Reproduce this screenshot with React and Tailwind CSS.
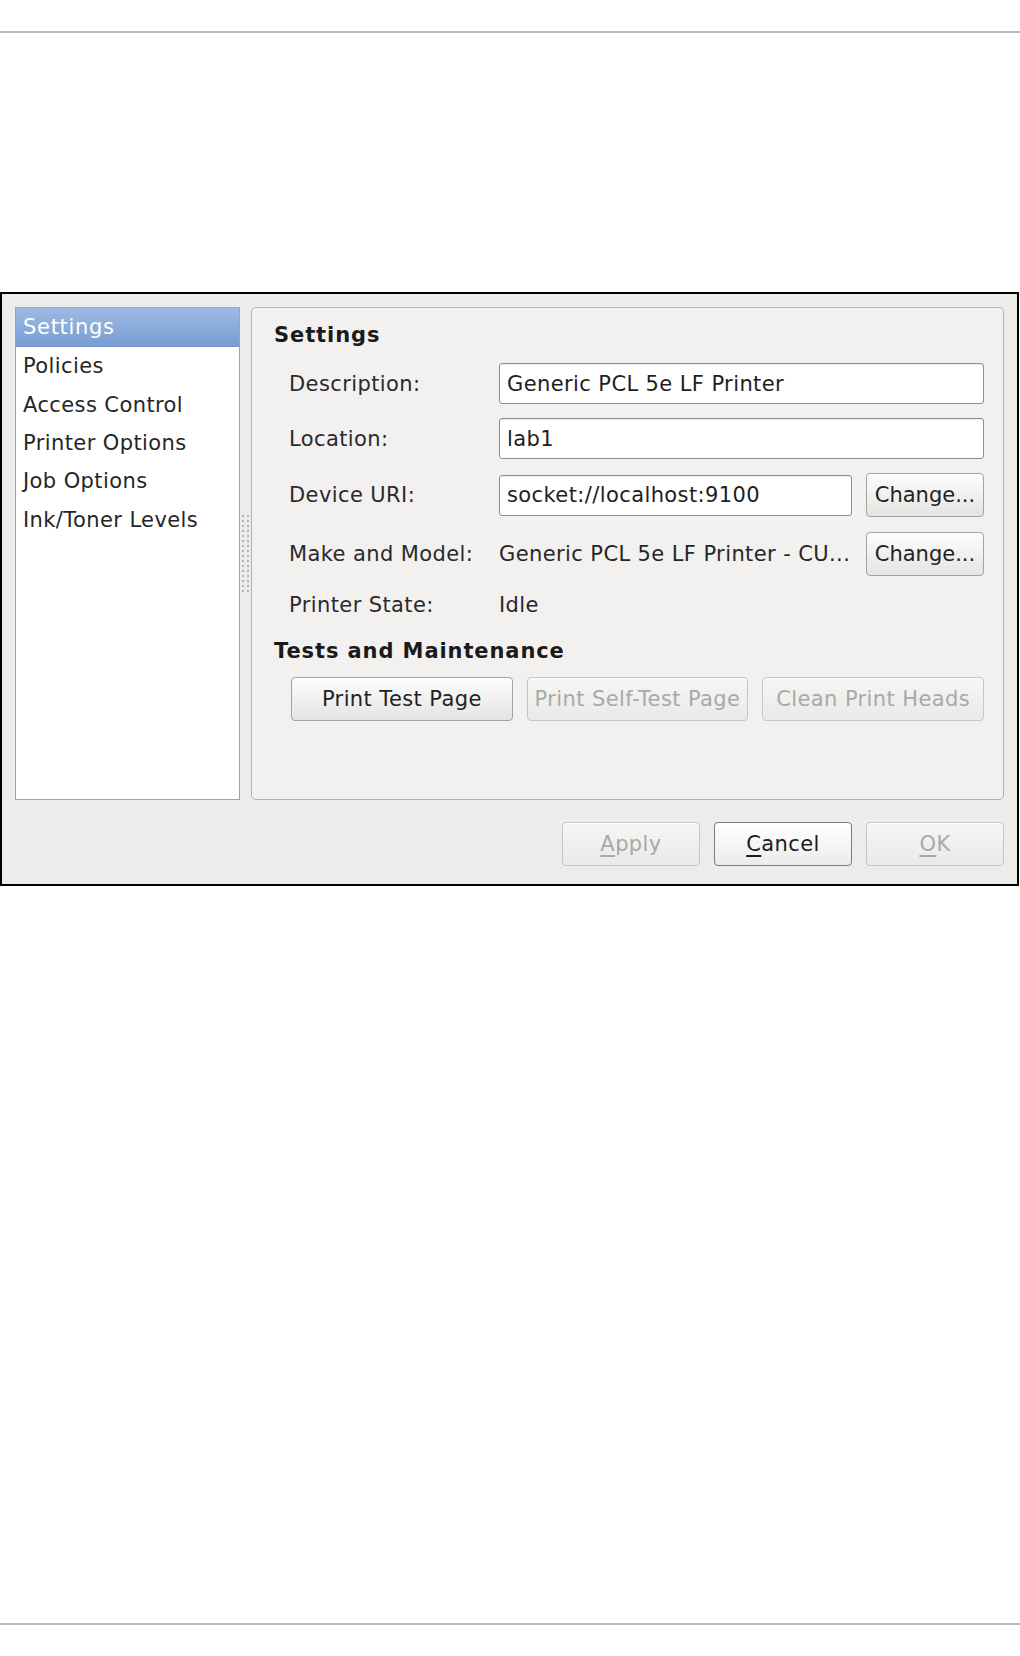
import React from "react";

const sections = [
  "Settings",
  "Policies",
  "Access Control",
  "Printer Options",
  "Job Options",
  "Ink/Toner Levels",
];

function Grip() {
  const dots = [];
  for (let i = 0; i < 16; i++) {
    dots.push(<rect key={"a" + i} x="2" y={1 + i * 5} width="2" height="2" fill="#b0b0b0" />);
    dots.push(<rect key={"b" + i} x="7" y={1 + i * 5} width="2" height="2" fill="#b0b0b0" />);
  }
  return (
    <svg width="11" height="80" viewBox="0 0 11 80">
      {dots}
    </svg>
  );
}

function Button({ children, disabled, focused, className = "" }) {
  let look =
    "border-[#a3a3a3] bg-gradient-to-b from-[#fdfdfd] to-[#e4e4e3] text-[#222]";
  if (disabled)
    look =
      "border-[#c6c6c5] bg-gradient-to-b from-[#f6f6f5] to-[#e9e9e8] text-[#a9a9a8]";
  if (focused)
    look =
      "border-[#7b7b7b] bg-gradient-to-b from-[#ffffff] to-[#ececec] text-[#1c1c1c]";
  return (
    <div
      className={`h-[44px] flex items-center justify-center rounded-[4px] border shadow-[inset_0_1px_0_#ffffff] whitespace-nowrap ${look} ${className}`}
    >
      {children}
    </div>
  );
}

function Field({ value, className = "" }) {
  return (
    <div
      className={`h-[41px] flex items-center px-[7px] bg-white border border-[#8e8e8d] rounded-[3px] shadow-[inset_0_1px_1px_rgba(0,0,0,0.08)] text-[#1e1e1e] ${className}`}
    >
      {value}
    </div>
  );
}

function Label({ children }) {
  return <div className="w-[210px] shrink-0 text-[#2a2a2a]">{children}</div>;
}

export default function App() {
  return (
    <div className="w-[1020px] h-[1656px] bg-white font-['DejaVu_Sans',sans-serif] text-[21px] leading-[26px] tracking-[0.4px]">
      <div className="h-[31px]" />
      <div className="h-[2px] bg-[#bbbbbb]" />
      <div className="h-[259px]" />

      {/* dialog window */}
      <div className="w-[1019px] border-2 border-black bg-[#edeceb] pt-[13px] pl-[13px] pr-[13px] pb-[18px]">
        <div className="flex h-[493px]">
          {/* sidebar */}
          <div className="w-[225px] h-full border border-[#a3a3a2] bg-white">
            {sections.map((s, i) =>
              i === 0 ? (
                <div
                  key={s}
                  className="h-[39px] flex items-center pl-[7px] text-white tracking-[0.7px] bg-gradient-to-b from-[#9dbae4] to-[#789dd3] border-b border-[#6f93c8]"
                >
                  {s}
                </div>
              ) : (
                <div key={s} className="h-[38.4px] flex items-center pl-[7px] text-[#262626]">
                  {s}
                </div>
              )
            )}
          </div>

          {/* pane grip */}
          <div className="w-[11px] flex items-center">
            <Grip />
          </div>

          {/* settings panel */}
          <div className="w-[753px] h-full border border-[#b3b3b2] rounded-[5px] bg-[#f2f1f0]">
            <div className="mt-[14px] pl-[22px] font-bold tracking-[0.9px] text-[#1a1a1a]">
              Settings
            </div>

            <div className="pl-[37px] pr-[19px]">
              <div className="mt-[15px] flex items-center h-[41px]">
                <Label>Description:</Label>
                <Field value="Generic PCL 5e LF Printer" className="flex-1" />
              </div>

              <div className="mt-[14px] flex items-center h-[41px]">
                <Label>Location:</Label>
                <Field value="lab1" className="flex-1" />
              </div>

              <div className="mt-[14px] flex items-center h-[44px]">
                <Label>Device URI:</Label>
                <Field value="socket://localhost:9100" className="flex-1" />
                <Button className="w-[118px] ml-[14px] tracking-normal">Change...</Button>
              </div>

              <div className="mt-[15px] flex items-center h-[44px]">
                <Label>Make and Model:</Label>
                <div className="flex-1 text-[#262626] whitespace-nowrap">
                  Generic PCL 5e LF Printer - CU...
                </div>
                <Button className="w-[118px] ml-[14px] tracking-normal">Change...</Button>
              </div>

              <div className="mt-[16px] flex items-center h-[26px]">
                <Label>Printer State:</Label>
                <div className="text-[#262626]">Idle</div>
              </div>
            </div>

            <div className="mt-[20px] pl-[22px] font-bold tracking-[0.9px] text-[#1a1a1a]">
              Tests and Maintenance
            </div>

            <div className="mt-[13px] pl-[39px] pr-[19px] flex gap-[14px]">
              <Button className="flex-1">Print Test Page</Button>
              <Button className="flex-1" disabled>
                Print Self-Test Page
              </Button>
              <Button className="flex-1" disabled>
                Clean Print Heads
              </Button>
            </div>
          </div>
        </div>

        {/* dialog buttons */}
        <div className="mt-[22px] flex justify-end gap-[14px]">
          <Button className="w-[138px]" disabled>
            <span>
              <span className="underline underline-offset-[4px]">A</span>pply
            </span>
          </Button>
          <Button className="w-[138px]" focused>
            <span>
              <span className="underline underline-offset-[4px]">C</span>ancel
            </span>
          </Button>
          <Button className="w-[138px]" disabled>
            <span>
              <span className="underline underline-offset-[4px]">O</span>K
            </span>
          </Button>
        </div>
      </div>

      <div className="h-[737px]" />
      <div className="h-[2px] bg-[#bbbbbb]" />
    </div>
  );
}
